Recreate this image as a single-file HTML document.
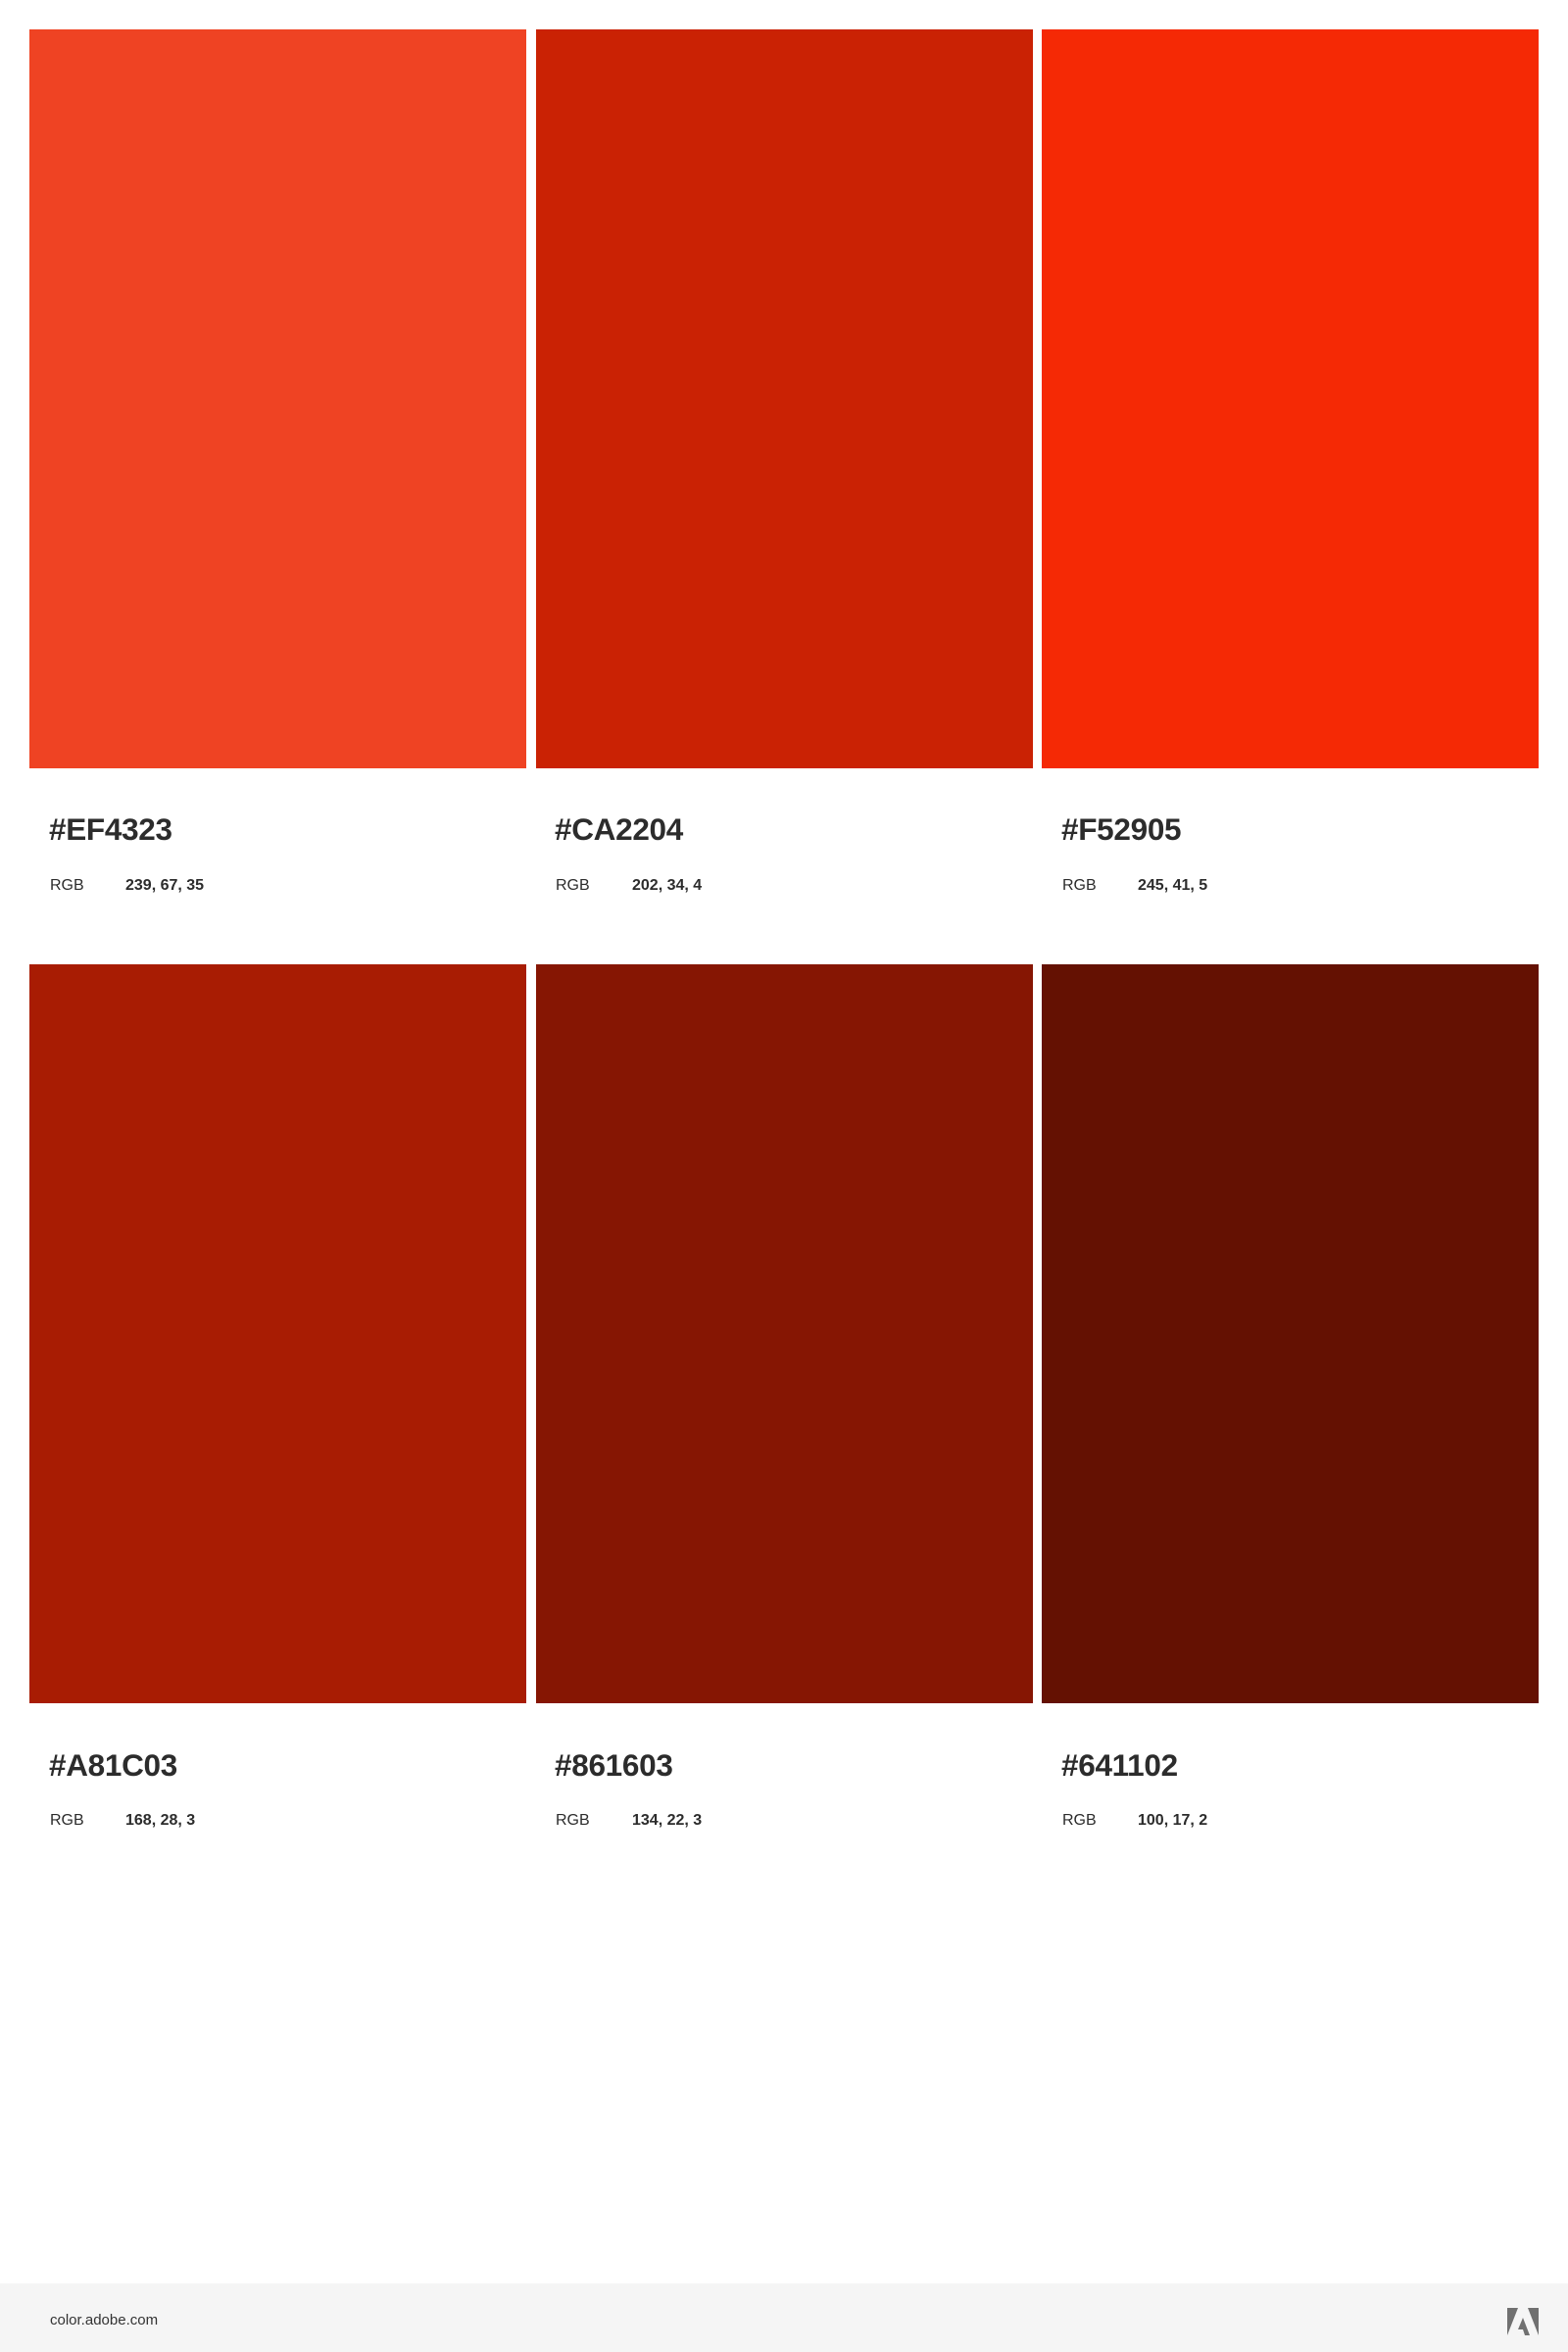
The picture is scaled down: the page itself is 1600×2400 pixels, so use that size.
<!DOCTYPE html>
<html><head><meta charset="utf-8"><style>
*{margin:0;padding:0}
body{width:1600px;height:2400px;background:#fff;position:relative;font-family:"Liberation Sans",sans-serif;color:#2c2c2c;overflow:hidden}
.s{position:absolute;width:507px;height:754px}
.h{position:absolute;font-size:31.5px;font-weight:bold;line-height:1;letter-spacing:-0.3px}
.l{position:absolute;font-size:16px;line-height:1}
.v{position:absolute;font-size:16px;font-weight:bold;line-height:1}
.f{position:absolute;left:0;top:2330px;width:1600px;height:70px;background:#f5f5f5}
</style></head><body>
<div class="s" style="left:30px;top:30px;background:#EF4323"></div>
<div class="s" style="left:547px;top:30px;background:#CA2204"></div>
<div class="s" style="left:1063px;top:30px;background:#F52905"></div>
<div class="s" style="left:30px;top:984px;background:#A81C03"></div>
<div class="s" style="left:547px;top:984px;background:#861603"></div>
<div class="s" style="left:1063px;top:984px;background:#641102"></div>

<div class="h" style="left:50px;top:831px">#EF4323</div>
<div class="l" style="left:51px;top:896px">RGB</div><div class="v" style="left:128px;top:896px">239, 67, 35</div>
<div class="h" style="left:566px;top:831px">#CA2204</div>
<div class="l" style="left:567px;top:896px">RGB</div><div class="v" style="left:645px;top:896px">202, 34, 4</div>
<div class="h" style="left:1083px;top:831px">#F52905</div>
<div class="l" style="left:1084px;top:896px">RGB</div><div class="v" style="left:1161px;top:896px">245, 41, 5</div>

<div class="h" style="left:50px;top:1786px">#A81C03</div>
<div class="l" style="left:51px;top:1850px">RGB</div><div class="v" style="left:128px;top:1850px">168, 28, 3</div>
<div class="h" style="left:566px;top:1786px">#861603</div>
<div class="l" style="left:567px;top:1850px">RGB</div><div class="v" style="left:645px;top:1850px">134, 22, 3</div>
<div class="h" style="left:1083px;top:1786px">#641102</div>
<div class="l" style="left:1084px;top:1850px">RGB</div><div class="v" style="left:1161px;top:1850px">100, 17, 2</div>

<div class="f">
<div style="position:absolute;left:51px;top:30px;font-size:15px;line-height:1;color:#333">color.adobe.com</div>
<svg style="position:absolute;left:1538px;top:25px" width="32" height="28" viewBox="0 0 32 28">
<polygon points="0,0 11,0 0,28" fill="#707070"/>
<polygon points="21,0 32,0 32,28" fill="#707070"/>
<polygon points="16,10 23,28 18,28 16,22 11,22" fill="#707070"/>
</svg>
</div>
</body></html>
